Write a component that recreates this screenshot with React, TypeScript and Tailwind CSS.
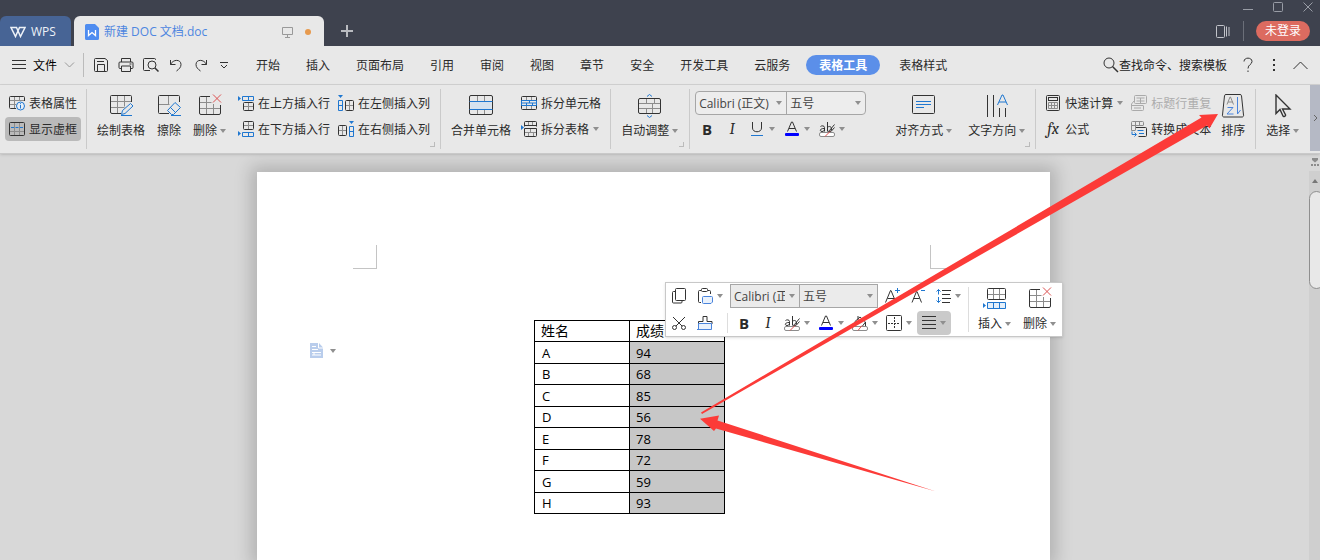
import type { ReactNode } from "react";

const rows = [
  ["A", 94],
  ["B", 68],
  ["C", 85],
  ["D", 56],
  ["E", 78],
  ["F", 72],
  ["G", 59],
  ["H", 93],
];

const DARK = "#333";
const GREY = "#8c8c8c";
const BLUE = "#1f77d0";

const Svg = ({ w = 16, h = 16, children }: { w?: number; h?: number; children: ReactNode }) => (
  <svg
    width={w}
    height={h}
    viewBox={`0 0 ${w} ${h}`}
    fill="none"
    stroke={DARK}
    className="shrink-0"
    aria-hidden="true"
  >
    {children}
  </svg>
);

const Caret = () => (
  <svg width="6" height="4" viewBox="0 0 6 4" className="shrink-0" aria-hidden="true">
    <path d="M0 0h6L3 4z" fill="#8f8f8f" />
  </svg>
);

// ribbon icons, 24px
const DrawTableIcon = () => (
  <Svg w={24} h={24}>
    <path d="M1.5 7.5h21M1.5 13.5h14M8.5 1.5v18M15.5 1.5v11" stroke={GREY} />
    <path d="M12 19.5H3a1.5 1.5 0 0 1-1.5-1.5V2.500a1 1 0 0 1 1-1h19a1 1 0 0 1 1 1V8" />
    <path d="M12.500 20.500l1-4 8-7 2.500 2.500-8 7.500zM12 21.500h11" stroke={BLUE} />
  </Svg>
);

const EraseIcon = () => (
  <Svg w={24} h={24}>
    <path d="M1.500 10.500h11M11.500 1.500v9" stroke={GREY} />
    <path d="M12 19.500H2.500a1 1 0 0 1-1-1v-16a1 1 0 0 1 1-1h19a1 1 0 0 1 1 1V8" />
    <path d="M18 8.500l5.500 5-7 7h-2l-4-4zM13 13l5.500 5.500M14 21.500h10" stroke={BLUE} />
  </Svg>
);

const DeleteIcon = () => (
  <Svg w={24} h={24}>
    <path d="M1.500 8.500h12M1.500 14.500h21M8.500 2.500v18M15.500 10v10.500" stroke={GREY} />
    <path d="M12 2.500H2.500a1 1 0 0 0-1 1V19a1.500 1.500 0 0 0 1.500 1.500h18a1.500 1.500 0 0 0 1.500-1.500v-8" />
    <path d="M15 .5l8 8M23 .5l-8 8" stroke="#dc5050" />
  </Svg>
);

const MergeIcon = () => (
  <Svg w={24} h={24}>
    <path d="M8.500 2v5M15.500 2v5M8.500 16v4M15.500 16v4" stroke={GREY} />
    <rect x="1.500" y="7.500" width="21" height="8" fill="#d5e2ef" stroke="none" />
    <rect x=".5" y="1.500" width="23" height="19" rx="1.500" />
    <path d="M.5 7.500h23M.5 15.500h23" stroke={BLUE} />
  </Svg>
);

const AutoFitIcon = () => (
  <Svg w={24} h={24}>
    <path d="M1 9.500h22M1 14.500h22M8.500 4v6M14.500 10v9M8.500 14v5M16.500 4v6" stroke={GREY} />
    <rect x=".5" y="4.500" width="22" height="15" rx="1.500" />
    <path d="M9 2.500l2.500-2 2.500 2M9 21.500l2.500 2 2.500-2" stroke={BLUE} />
  </Svg>
);

const AlignIcon = () => (
  <Svg w={24} h={24}>
    <rect x=".5" y="1.500" width="22" height="18" rx="1" />
    <path d="M4 7.500h15M4 10.500h15M4 13.500h8" stroke={BLUE} />
  </Svg>
);

const TextDirectionIcon = () => (
  <Svg w={24} h={24}>
    <path d="M2.500 1v22M8.500 1v22M14.500 14v9M20.500 14v9" />
    <path d="M12.500 11l4.500-10h1l4.500 10M14 8h7" stroke={BLUE} />
  </Svg>
);

const SortIcon = () => (
  <Svg w={24} h={24}>
    <path d="M5 .5h14a1.500 1.500 0 0 1 1.500 1.200L22.500 21a1.500 1.500 0 0 1-1.500 2H3a1.500 1.500 0 0 1-1.500-2L3.500 1.700A1.500 1.500 0 0 1 5 .5z" />
    <path d="M6 10.500l3-7.500h.5l3 7.500M7 8h5" stroke={GREY} />
    <path d="M6.500 13.500h5.500l-6 6.500h6.500M16.500 3v17l3-4" stroke="#4a84dc" />
  </Svg>
);

const CursorIcon = () => (
  <Svg w={24} h={24}>
    <path d="M5 1v18.500l4-4 3 6.500c.5 1 3 .2 2.500-1.200l-3-5.800h7.500z" strokeWidth="1.400" />
  </Svg>
);

// ribbon icons, 16px
const TablePropsIcon = () => (
  <Svg>
    <path d="M.5 5.500h15M.5 9.500h7M5.500 1v12M10.500 1v5" stroke={GREY} />
    <path d="M7 13.500H1.500a1 1 0 0 1-1-1v-10a1 1 0 0 1 1-1h13a1 1 0 0 1 1 1V6" />
    <circle cx="11.500" cy="11" r="4" stroke={BLUE} fill="#e8eff7" />
    <path d="M11.500 10v3.500M11.500 8.200v1" stroke={BLUE} />
  </Svg>
);

const GridLinesIcon = () => (
  <Svg>
    <path d="M.5 10.500h15M5.500 2v12M10.500 2v12" stroke={GREY} />
    <rect x=".5" y="1.500" width="15" height="13" rx="1" />
    <path d="M2 6.500h3M6.500 6.500h3M11 6.500h3" stroke={BLUE} />
  </Svg>
);

const InsertAboveIcon = () => (
  <Svg>
    <path d="M0 1v5l3-2.500z" fill={BLUE} stroke="none" />
    <path d="M4.500 1.500h11v4h-11zM10.500 1.500v4" stroke={BLUE} />
    <path d="M10.500 7v8M5 11.500h10" stroke={GREY} />
    <rect x="5.500" y="7.500" width="10" height="8" rx="1" />
  </Svg>
);

const InsertBelowIcon = () => (
  <Svg>
    <path d="M0 10v5l3-2.500z" fill={BLUE} stroke="none" />
    <path d="M4.500 11.500h11v4h-11zM10.500 11.500v4" stroke={BLUE} />
    <path d="M10.500 1v8M5 4.500h10" stroke={GREY} />
    <rect x="5.500" y=".5" width="10" height="8" rx="1" />
  </Svg>
);

const InsertLeftIcon = () => (
  <Svg>
    <path d="M0 0h5L2.500 3z" fill={BLUE} stroke="none" />
    <path d="M.5 5.500h4v10h-4zM.5 10.500h4" stroke={BLUE} />
    <path d="M11.500 6v9M7 10.500h8" stroke={GREY} />
    <rect x="7.500" y="5.500" width="8" height="10" rx="1" />
  </Svg>
);

const InsertRightIcon = () => (
  <Svg>
    <path d="M11 0h5l-2.500 3z" fill={BLUE} stroke="none" />
    <path d="M11.500 5.500h4v10h-4zM11.500 10.500h4" stroke={BLUE} />
    <path d="M4.500 5v9M1 9.500h8" stroke={GREY} />
    <rect x=".5" y="4.500" width="8" height="10" rx="1" />
  </Svg>
);

const SplitCellIcon = () => (
  <Svg>
    <path d="M5.500 1v4M10.500 1v4M5.500 11v3M10.500 11v3" stroke={GREY} />
    <rect x=".5" y="1.500" width="15" height="13" rx="1" />
    <path d="M.5 5.500h15v5H.5zM.5 8h15M8.500 5.500v2.500M5.500 8v2.500M11.500 8v2.500" stroke={BLUE} />
  </Svg>
);

const SplitTableIcon = () => (
  <Svg>
    <path d="M0 4v5l3-2.500z" fill={BLUE} stroke="none" />
    <path d="M7.500 1v4M11.500 1v4M4 11.500h11M9.500 7v4M7.500 11v4M12.500 11v4" stroke={GREY} />
    <path d="M3.500 5.500v-4a1 1 0 0 1 1-1h10a1 1 0 0 1 1 1v4M3.500 4.500h12M3.500 7.500h12v7a1 1 0 0 1-1 1h-10a1 1 0 0 1-1-1z" />
  </Svg>
);

const CalcIcon = () => (
  <Svg>
    <rect x="1.500" y=".5" width="13" height="15" rx="1" />
    <rect x="3.500" y="2.500" width="9" height="3" />
    <path d="M3.500 7.500h9v6h-9zM3.500 10.500h9M6.500 7.500v6M9.500 7.500v6" stroke={GREY} />
  </Svg>
);

const HeaderRepeatIcon = () => (
  <svg width="16" height="16" viewBox="0 0 16 16" fill="none" stroke="#aaa" className="shrink-0" aria-hidden="true">
    <path d="M4.500.5h10a1 1 0 0 1 1 1v6a1 1 0 0 1-1 1h-10a1 1 0 0 1-1-1v-6a1 1 0 0 1 1-1zM5.500 3h8M5.500 6h8M9.500 3v5" />
    <path d="M3 6l-2.500 3v5.500a1 1 0 0 0 1 1h10a1 1 0 0 0 1-1V11M.5 10.500h12M3 13h7" />
  </svg>
);

const ToTextIcon = () => (
  <Svg>
    <path d="M4 9.500H.5v-8a1 1 0 0 1 1-1h10a1 1 0 0 1 1 1V4M.5 4.500h12M4.500.5v9M8.500.5v4" stroke={GREY} />
    <path d="M5 6.500h9.500a1 1 0 0 1 1 1v7a1 1 0 0 1-1 1h-7" />
    <path d="M6.500 9.500h6M8 12.500h5M1 10.500v3h4M3.500 11.500l2 2-2 2" stroke={BLUE} />
  </Svg>
);

// text formatting icons
const FontColorIcon = () => (
  <Svg>
    <path d="M3.500 10.500L7.500 1h1l4 9.500M5 7.500h6" />
    <rect x="1" y="12" width="14" height="3" rx="1" fill="#00f" stroke="none" />
  </Svg>
);

const HighlightIcon = () => (
  <Svg>
    <path d="M1.500 5.500c1-1 4-1 4 1v4M5.500 7.500c-5-.3-5 3-2.500 3 1.500 0 2.500-1 2.500-2M8.500 1v9.500M8.500 6.500c1-1.500 4-1.500 4 1.500s-3 3-4 1.500M15.500 3.500l-5 6-1 2.500 2.500-1.500 3.500-4" />
    <rect x=".5" y="11.500" width="15" height="4" rx="1.500" stroke={GREY} fill="#fff" />
    <path d="M6 15.500l5-5" stroke="#e05050" />
  </Svg>
);

const CopyIcon = () => (
  <Svg>
    <rect x="4.500" y=".5" width="10" height="12" rx="1" />
    <path d="M4 3.500H2.500a1 1 0 0 0-1 1v9.500a1 1 0 0 0 1 1h7.500a1 1 0 0 0 1-1v-1" />
  </Svg>
);

const PasteIcon = () => (
  <Svg>
    <path d="M4 2.500H2.500a1 1 0 0 0-1 1v10a1 1 0 0 0 1 1H4M11 2.500h1.500a1 1 0 0 1 1 1V6" />
    <rect x="4.500" y=".5" width="6" height="3" rx="1" />
    <path d="M6.500 8.500h8a1 1 0 0 1 1 1V14l-1.500 1.500H6.500a1 1 0 0 1-1-1v-5a1 1 0 0 1 1-1z" stroke="#4a84dc" fill="#eaf2fc" />
  </Svg>
);

const CutIcon = () => (
  <Svg>
    <path d="M2 2l9 9M14 2l-9 9" />
    <circle cx="3.500" cy="12.500" r="2" />
    <circle cx="12.500" cy="12.500" r="2" />
  </Svg>
);

const BrushIcon = () => (
  <Svg>
    <path d="M1.500 9V6.500h4.500V1.500h4v5h5V9" />
    <path d="M1.500 8.500h13v6h-13zM0 14.500h3" stroke="#4a84dc" fill="#eaf2fc" />
  </Svg>
);

const GrowFontIcon = () => (
  <Svg>
    <path d="M.5 14.500L5.500 2.500h.5l5 12M2.500 10.500h7" />
    <path d="M12.500 0v5M10 2.500h5" stroke={BLUE} />
  </Svg>
);

const ShrinkFontIcon = () => (
  <Svg>
    <path d="M2 14.500L6.500 3.500h.5l4.500 11M3.500 10.500h6" />
    <path d="M11 2.500h4" stroke={BLUE} />
  </Svg>
);

const LineSpacingIcon = () => (
  <Svg>
    <path d="M7 2.500h9M7 6.500h8M7 10.500h9M7 14.500h8" />
    <path d="M3.500 1.500v5M1.500 3.500l2-2 2 2M3.500 9v5.500M1.500 12.500l2 2 2-2" stroke={BLUE} />
  </Svg>
);

const FillIcon = () => (
  <Svg>
    <path d="M3 6.500l5-4.500 5.500 5-3 4M3 6.500v4.500M6 1v4M13.500 7v4M5 8l4-4" />
    <rect x=".5" y="11.500" width="15" height="4" rx="1.500" stroke={GREY} />
    <path d="M6 15.500l4-5" stroke="#e05050" />
  </Svg>
);

const BorderIcon = () => (
  <Svg>
    <rect x=".5" y=".5" width="15" height="15" rx="1" />
    <path d="M8.500 2v12M2 8.500h12" strokeDasharray="2 1" />
  </Svg>
);

const JustifyIcon = () => (
  <Svg w={14} h={14}>
    <path d="M0 .5h14M0 4.500h14M0 8.500h14M0 12.500h14" />
  </Svg>
);

const InsertRowIcon = () => (
  <Svg w={24} h={24}>
    <path d="M10.500 2v10M16.500 2v10M5 7.500h17" stroke={GREY} />
    <rect x="4.500" y="1.500" width="18" height="11" rx="1" />
    <path d="M4.500 15.500h18v6h-18zM10.500 15.500v6M16.500 15.500v6" stroke={BLUE} fill="#e4effa" />
    <path d="M0 16v5l3-2.500z" fill={BLUE} stroke="none" />
  </Svg>
);

const BigButton = ({ icon, label, caret }: { icon: ReactNode; label: string; caret?: boolean }) => (
  <button className="flex flex-col items-center gap-[5px]">
    {icon}
    <span className="flex items-center gap-[3px] leading-4 whitespace-nowrap">
      {label}
      {caret && <Caret />}
    </span>
  </button>
);

const SmallButton = ({ icon, label, caret }: { icon: ReactNode; label: string; caret?: boolean }) => (
  <button className="flex h-6 items-center gap-1 whitespace-nowrap">
    {icon}
    <span className="pt-0.5">{label}</span>
    {caret && <Caret />}
  </button>
);

const IconButton = ({ label, caret, children }: { label: string; caret?: boolean; children: ReactNode }) => (
  <button aria-label={label} className="flex h-6 min-w-4 items-center justify-center gap-1">
    {children}
    {caret && <Caret />}
  </button>
);

const Group = ({ className, launcher, children }: { className: string; launcher?: boolean; children: ReactNode }) => (
  <div
    className={`relative my-1 flex shrink-0 items-start border-r border-[#cacaca] pt-0.5 [&>button]:pt-[3px] ${className}`}
  >
    {children}
    {launcher && <span className="absolute right-[5px] bottom-0.5 size-[5px] border-r border-b border-[#bbb]" />}
  </div>
);

const Combo = ({ label, value, className }: { label: string; value: string; className: string }) => (
  <div className={`relative flex items-center ${className}`}>
    <select
      aria-label={label}
      className="size-full appearance-none bg-transparent pt-0.5 pr-3.5 pl-[3px] text-[#444] outline-none"
    >
      <option>{value}</option>
    </select>
    <span className="pointer-events-none absolute right-1">
      <Caret />
    </span>
  </div>
);

const TitleBar = () => (
  <header className="flex h-[46px] shrink-0 items-end bg-[#3e424e]">
    <button className="flex h-[30px] w-[71px] items-center gap-[5px] rounded-t-md bg-[#476495] pt-0.5 pl-2.5 text-[#eef2f8]">
      <svg width="16" height="12" viewBox="0 0 16 12" fill="none" stroke="#eef2f8" strokeWidth="1.500" aria-hidden="true">
        <path d="M1 1.500h5.500l4 9L15 1.500H9.500l-4 9z" />
      </svg>
      WPS
    </button>
    <div className="ml-[3px] flex h-[30px] w-[250px] items-center rounded-t-md bg-[#e8e8e8] pt-0.5 pr-[13px] pl-[11px]">
      <svg width="14" height="16" viewBox="0 0 14 16" aria-hidden="true">
        <path d="M1.500 0H10l4 4v10.500a1.500 1.500 0 0 1-1.500 1.500h-11A1.500 1.500 0 0 1 0 14.500v-13A1.500 1.500 0 0 1 1.500 0z" fill="#4e8cf0" />
        <path d="M3.500 6v5.500L7 8.500l3.500 3V6" fill="none" stroke="#fff" strokeWidth="1.300" />
      </svg>
      <span className="ml-[5px] text-[#4e86e0]">新建 DOC 文档.doc</span>
      <svg className="ml-auto" width="11" height="12" viewBox="0 0 11 12" fill="none" stroke="#999" aria-hidden="true">
        <path d="M.5 1.500h10v7H.5zM5.500 8.500v3M3 11.500h5" />
      </svg>
      <span className="ml-3 size-1.5 rounded-full bg-[#e79a4e]" />
    </div>
    <button aria-label="新建标签" className="mb-[9px] ml-[17px]">
      <svg width="12" height="12" viewBox="0 0 12 12" stroke="#b9bbc0" strokeWidth="2" aria-hidden="true">
        <path d="M6 0v12M0 6h12" />
      </svg>
    </button>
    <div className="ml-auto flex flex-col items-end gap-[9px] pb-[5px]">
      <div className="flex items-center gap-5 pr-[7px]">
        <button aria-label="最小化">
          <svg width="10" height="10" viewBox="0 0 10 10" stroke="#999da6" aria-hidden="true">
            <path d="M0 7.500h10" />
          </svg>
        </button>
        <button aria-label="最大化">
          <svg width="10" height="10" viewBox="0 0 10 10" fill="none" stroke="#999da6" aria-hidden="true">
            <rect x=".5" y=".5" width="9" height="9" rx="1" />
          </svg>
        </button>
        <button aria-label="关闭">
          <svg width="10" height="10" viewBox="0 0 10 10" stroke="#999da6" aria-hidden="true">
            <path d="M.5.5l9 9M9.500.5l-9 9" />
          </svg>
        </button>
      </div>
      <div className="flex items-center pr-2.5">
        <button aria-label="窗口列表">
          <svg width="14" height="13" viewBox="0 0 14 13" fill="none" stroke="#c2c4ca" aria-hidden="true">
            <rect x=".5" y=".5" width="8" height="12" rx="1" />
            <path d="M10.500 1.500v10M13 2v9" />
          </svg>
        </button>
        <span className="mr-3 ml-[13px] h-5 w-px bg-[#6b6f79]" />
        <button className="h-5 rounded-full bg-[#dc6b60] px-[9px] text-white">未登录</button>
      </div>
    </div>
  </header>
);

const MenuBar = () => (
  <nav className="flex h-[39px] shrink-0 items-center border-b border-[#d2d2d2] bg-[#e8e8e8]">
    <button className="flex items-center pl-3">
      <Svg w={15} h={12}>
        <path d="M0 1.500h14M0 5.500h14M0 9.500h14" />
      </Svg>
      <span className="mr-[7px] ml-1.5 pt-0.5 text-black">文件</span>
      <Svg w={11} h={6}>
        <path d="M1 .5l4.500 4.500L10 .5" stroke="#999" />
      </Svg>
    </button>
    <span className="mr-[9px] ml-2 h-6 w-px bg-[#bbb]" />
    <div className="flex items-center gap-[9px]">
      <button aria-label="保存">
        <Svg>
          <path d="M1.500 2.500a1 1 0 0 1 1-1H12l2.500 2v10a1 1 0 0 1-1 1h-11a1 1 0 0 1-1-1zM4.500 14V7.500h7V14M4 4.500h7" />
        </Svg>
      </button>
      <button aria-label="打印">
        <Svg>
          <path d="M3.500 5V1.500h9V5M3.500 11.500H2a1 1 0 0 1-1-1V6a1 1 0 0 1 1-1h12a1 1 0 0 1 1 1v4.500a1 1 0 0 1-1 1h-1.500M3.500 9h9v5.500h-9zM11.500 7h2" />
        </Svg>
      </button>
      <button aria-label="打印预览">
        <Svg>
          <path d="M7 13.500H1.500a1 1 0 0 1-1-1v-10a1 1 0 0 1 1-1h10a1 1 0 0 1 1 1V3" />
          <circle cx="9" cy="8" r="4" />
          <path d="M12 11l3.500 3.500" strokeWidth="1.500" />
        </Svg>
      </button>
      <button aria-label="撤销">
        <Svg>
          <path d="M2.500 3v4.500h5M2.500 7.500C5 2 13 2 13 7.500c0 3-2 4.500-4.500 6.500" />
        </Svg>
      </button>
      <button aria-label="恢复">
        <Svg>
          <path d="M13.500 3v4.500h-5M13.500 7.500C11 2 3 2 3 7.500c0 3 2 4.500 4.500 6.500" />
        </Svg>
      </button>
      <button aria-label="更多命令" className="pl-0.5">
        <Svg w={8} h={8}>
          <path d="M0 1.500h8M1 4l3 3 3-3" />
        </Svg>
      </button>
    </div>
    <div className="ml-[15px] flex items-center whitespace-nowrap">
      {["开始", "插入", "页面布局", "引用", "审阅", "视图", "章节", "安全", "开发工具", "云服务"].map((tab) => (
        <button key={tab} className="px-[13px] pt-0.5">
          {tab}
        </button>
      ))}
      <button className="mr-1.5 ml-[3px] h-5 rounded-full bg-[#5b8fe9] px-[13px] pt-0.5 leading-4 font-bold text-white">
        表格工具
      </button>
      <button className="px-[13px] pt-0.5">表格样式</button>
    </div>
    <div className="ml-auto flex shrink-0 items-center pr-3">
      <label className="flex items-center">
        <Svg>
          <circle cx="6" cy="6" r="5" />
          <path d="M9.500 9.500l5.500 5.500" strokeWidth="1.500" />
        </Svg>
        <input
          aria-label="查找命令"
          placeholder="查找命令、搜索模板"
          className="w-[123px] bg-transparent pt-0.5 outline-none placeholder:text-[#222]"
        />
      </label>
      <button aria-label="帮助">
        <Svg w={12} h={16}>
          <path d="M2 4.500C2 0 10 0 10 4.500 10 7.500 6 7.500 6 11.500M6 13.500v1.500" />
        </Svg>
      </button>
      <button aria-label="更多" className="mr-[17px] ml-[19px]">
        <Svg w={3} h={14}>
          <path d="M0 2h2M0 7h2M0 12h2" strokeWidth="2" />
        </Svg>
      </button>
      <button aria-label="折叠功能区">
        <Svg w={15} h={9}>
          <path d="M.5 8L7.500 1l7 7" />
        </Svg>
      </button>
    </div>
  </nav>
);

const Ribbon = () => (
  <section className="relative z-10 flex h-[69px] shrink-0 border-b border-[#c9c9c9] bg-[#e8e8e8] shadow-sm">
    <Group className="px-[5px]">
      <div className="flex flex-col gap-0.5">
        <div className="px-1">
          <SmallButton icon={<TablePropsIcon />} label="表格属性" />
        </div>
        <div className="rounded bg-[#bababa] px-1">
          <SmallButton icon={<GridLinesIcon />} label="显示虚框" />
        </div>
      </div>
    </Group>
    <Group className="gap-3 px-2.5" launcher>
      <BigButton icon={<DrawTableIcon />} label="绘制表格" />
      <BigButton icon={<EraseIcon />} label="擦除" />
      <BigButton icon={<DeleteIcon />} label="删除" caret />
      <div className="grid grid-cols-2 gap-x-2 gap-y-0.5">
        <SmallButton icon={<InsertAboveIcon />} label="在上方插入行" />
        <SmallButton icon={<InsertLeftIcon />} label="在左侧插入列" />
        <SmallButton icon={<InsertBelowIcon />} label="在下方插入行" />
        <SmallButton icon={<InsertRightIcon />} label="在右侧插入列" />
      </div>
    </Group>
    <Group className="gap-2.5 pr-[9px] pl-2.5">
      <BigButton icon={<MergeIcon />} label="合并单元格" />
      <div className="flex flex-col gap-0.5">
        <SmallButton icon={<SplitCellIcon />} label="拆分单元格" />
        <SmallButton icon={<SplitTableIcon />} label="拆分表格" caret />
      </div>
    </Group>
    <Group className="pr-[11px] pl-2.5" launcher>
      <BigButton icon={<AutoFitIcon />} label="自动调整" caret />
    </Group>
    <Group className="gap-4 pr-2.5 pl-[5px]" launcher>
      <div className="mr-[13px] flex flex-col gap-0.5">
        <div className="flex h-6 rounded border border-[#a6a6a6] bg-[#ededed]">
          <Combo label="字体" value="Calibri (正文)" className="w-[91px] border-r border-[#a6a6a6]" />
          <Combo label="字号" value="五号" className="w-[78px]" />
        </div>
        <div className="flex items-center gap-[9px] pl-1">
          <IconButton label="加粗">
            <b className="text-[15px]">B</b>
          </IconButton>
          <IconButton label="倾斜">
            <i className="font-serif text-base">I</i>
          </IconButton>
          <IconButton label="下划线" caret>
            <Svg>
              <path d="M3.500 1v6c0 5 9 5 9 0V1" />
              <path d="M2 14.500h12" stroke={BLUE} />
            </Svg>
          </IconButton>
          <IconButton label="字体颜色" caret>
            <FontColorIcon />
          </IconButton>
          <IconButton label="突出显示" caret>
            <HighlightIcon />
          </IconButton>
        </div>
      </div>
      <BigButton icon={<AlignIcon />} label="对齐方式" caret />
      <BigButton icon={<TextDirectionIcon />} label="文字方向" caret />
    </Group>
    <Group className="pr-2.5 pl-[9px]">
      <div className="flex flex-col items-start gap-0.5">
        <SmallButton icon={<CalcIcon />} label="快速计算" caret />
        <SmallButton icon={<i className="w-4 font-serif text-base leading-4">fx</i>} label="公式" />
      </div>
      <div className="mr-2.5 ml-2 flex flex-col gap-0.5">
        <div className="text-[#adadad]">
          <SmallButton icon={<HeaderRepeatIcon />} label="标题行重复" />
        </div>
        <SmallButton icon={<ToTextIcon />} label="转换成文本" />
      </div>
      <BigButton icon={<SortIcon />} label="排序" />
    </Group>
    <div className="my-1 flex items-start pt-[5px] pl-2.5">
      <BigButton icon={<CursorIcon />} label="选择" caret />
    </div>
    <button aria-label="向右滚动" className="mb-0.5 ml-auto flex w-2.5 items-center justify-center bg-[#b5b9c5]">
      <Svg w={5} h={8}>
        <path d="M1 1l3 3-3 3" stroke="#666" />
      </Svg>
    </button>
  </section>
);

const MiniToolbar = () => (
  <div className="absolute top-[110px] left-[408px] flex h-[55px] border border-[#c8c8c8] bg-white pl-[5px] shadow">
    <div className="flex flex-col justify-center gap-[3px]">
      <div className="flex items-center">
        <div className="flex gap-2.5">
          <IconButton label="复制">
            <CopyIcon />
          </IconButton>
          <IconButton label="粘贴" caret>
            <PasteIcon />
          </IconButton>
        </div>
        <div className="mx-[7px] flex h-6 border border-[#a6a6a6] bg-[#ebebeb]">
          <Combo label="字体" value="Calibri (正文)" className="w-[69px] border-r border-[#a6a6a6]" />
          <Combo label="字号" value="五号" className="w-[77px]" />
        </div>
        <div className="flex gap-[9px]">
          <IconButton label="增大字号">
            <GrowFontIcon />
          </IconButton>
          <IconButton label="减小字号">
            <ShrinkFontIcon />
          </IconButton>
          <IconButton label="行距" caret>
            <LineSpacingIcon />
          </IconButton>
        </div>
      </div>
      <div className="flex items-center">
        <div className="flex gap-2.5">
          <IconButton label="剪切">
            <CutIcon />
          </IconButton>
          <IconButton label="格式刷">
            <BrushIcon />
          </IconButton>
        </div>
        <span className="mr-2 ml-3.5 h-5 w-px bg-[#ddd]" />
        <div className="flex gap-2">
          <IconButton label="加粗">
            <b className="text-[15px]">B</b>
          </IconButton>
          <IconButton label="倾斜">
            <i className="font-serif text-base">I</i>
          </IconButton>
          <IconButton label="突出显示" caret>
            <HighlightIcon />
          </IconButton>
          <IconButton label="字体颜色" caret>
            <FontColorIcon />
          </IconButton>
          <IconButton label="底纹" caret>
            <FillIcon />
          </IconButton>
          <IconButton label="边框" caret>
            <BorderIcon />
          </IconButton>
        </div>
        <div className="ml-[5px] rounded bg-[#cacaca] px-[5px]">
          <IconButton label="对齐" caret>
            <JustifyIcon />
          </IconButton>
        </div>
      </div>
    </div>
    <div className="my-1 ml-[7px] flex items-start gap-3 border-l border-[#ddd] pr-1.5 pl-[9px]">
      <BigButton icon={<InsertRowIcon />} label="插入" caret />
      <BigButton icon={<DeleteIcon />} label="删除" caret />
    </div>
  </div>
);

const ScoreTable = () => (
  <table className="w-[191px] table-fixed border-collapse text-left text-[13px] leading-4 text-black">
    <thead>
      <tr className="h-[21px]">
        <th className="border border-black p-0 pl-1.5 text-sm leading-4 font-normal">姓名</th>
        <th className="border border-black p-0 pl-1.5 text-sm leading-4 font-normal">成绩</th>
      </tr>
    </thead>
    <tbody>
      {rows.map(([name, score]) => (
        <tr key={name} className="h-[21px] odd:h-[22px]">
          <td className="border border-black p-0 pl-[7px]">{name}</td>
          <td className="border border-black bg-[#c7c7c7] p-0 pl-1.5">{score}</td>
        </tr>
      ))}
    </tbody>
  </table>
);

// red pointers from the score column to the sort button
const Arrows = () => (
  <svg
    width="1320"
    height="560"
    viewBox="0 0 1320 560"
    fill="#fc3b38"
    className="pointer-events-none absolute top-0 left-0 z-20"
    aria-hidden="true"
  >
    <path d="M701 412.500L1201.500 117.500 1199 115 1218 114 1209.500 128.500 1207 125.500 702 414z" />
    <path d="M700 418.700L719 415.500 717.500 420.500 936 491.500 716 428.500 714 431z" />
  </svg>
);

export default function App() {
  return (
    <div className="relative flex h-screen flex-col overflow-hidden bg-[#d8d8d8] font-['Open_Sans','Noto_Sans_CJK_SC',sans-serif] text-xs text-[#2b2b2b]">
      <TitleBar />
      <MenuBar />
      <Ribbon />
      <main className="flex min-h-0 flex-1">
        <div className="flex flex-1 justify-center pt-[18px] pr-0.5">
          <article className="relative h-full w-[793px] bg-white pt-[73px] shadow-[0_0_16px_6px_rgba(0,0,0,0.18)]">
            <div className="flex justify-between px-24">
              <span className="size-6 border-r border-b border-[#c4c4c4]" />
              <span className="size-6 border-b border-l border-[#c4c4c4]" />
            </div>
            <div className="flex items-start pt-[51px] pl-[53px]">
              <button aria-label="粘贴选项" className="mt-[23px] flex items-center gap-1.5">
                <svg width="14" height="16" viewBox="0 0 14 16" aria-hidden="true">
                  <path d="M0 0h9l4 4.500V15H0z" fill="#b9cdec" />
                  <path d="M2 3.500h4M2 6.500h6M2 9.500h9M2 12h9M8.500 0v5H13M4 10v2" stroke="#fff" fill="none" />
                </svg>
                <Caret />
              </button>
              <div className="ml-[198px]">
                <ScoreTable />
              </div>
            </div>
            <MiniToolbar />
          </article>
        </div>
        <aside className="flex w-[11px] shrink-0 flex-col overflow-hidden">
          <button aria-label="标尺" className="flex h-[17px] items-center justify-center">
            <Svg w={8} h={9}>
              <path d="M1 0h6v2L4 4.500 1 2z" fill={GREY} stroke="none" />
              <path d="M0 7h8" stroke={GREY} strokeWidth="2" strokeDasharray="2 1" />
            </Svg>
          </button>
          <div className="flex flex-1 flex-col items-center bg-[#cfcfcf] pt-2">
            <svg width="6" height="4" viewBox="0 0 6 4" aria-hidden="true">
              <path d="M0 4h6L3 0z" fill="#777" />
            </svg>
            <div className="mt-2 h-[98px] w-[15px] self-start rounded-full border border-[#8f8f8f] bg-[#e8e8e8]" />
          </div>
        </aside>
      </main>
      <Arrows />
    </div>
  );
}
